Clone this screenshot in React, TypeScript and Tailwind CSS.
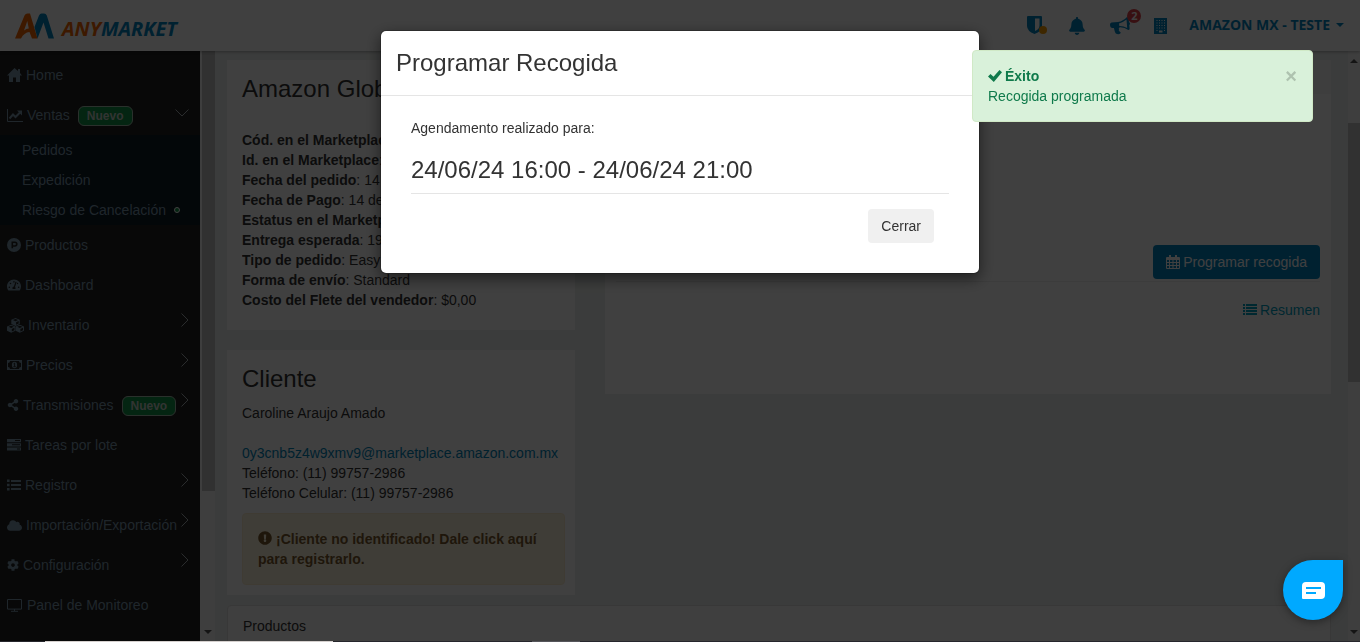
import { useState } from "react";
import type { ReactNode } from "react";
import {
  FaBell,
  FaCloud,
  FaCog,
  FaExclamationCircle,
  FaShareAlt,
  FaTachometerAlt,
} from "react-icons/fa";

type NavItem = {
  label: string;
  icon: ReactNode;
  isNew?: boolean;
  arrow?: "right" | "down";
  children?: { label: string; dot?: boolean }[];
};

function HomeIcon() {
  return (
    <svg width="15" height="14" viewBox="0 0 15 14" aria-hidden="true">
      <path d="M7.5 0L11 3V1h2v4l2 2.500h-2V14H9V9.500H6V14H2V7.500H0z" fill="currentColor" />
    </svg>
  );
}

function ChartIcon() {
  return (
    <svg width="16" height="13" viewBox="0 0 16 13" aria-hidden="true">
      <path d="M.5 0v12.500H16" fill="none" stroke="currentColor" />
      <path d="M2.500 9.500L6 5.500l2.500 2.500L13 3.500" fill="none" stroke="currentColor" strokeWidth="2" />
      <path d="M10 1.500h5v5z" fill="currentColor" />
    </svg>
  );
}

function ProductIcon() {
  return (
    <svg width="14" height="14" viewBox="0 0 14 14" aria-hidden="true">
      <circle cx="7" cy="7" r="7" fill="currentColor" />
      <path d="M5.3 10.3V4.2h2.6a1.8 1.8 0 0 1 0 3.8H5.3" fill="none" stroke="#202020" strokeWidth="1.6" />
    </svg>
  );
}

function CubesIcon() {
  const cube =
    "M4.200 0L8.400 1.800V6L4.200 8 0 6V1.800zM4.200 1L1.600 2.100 4.200 3.200 6.800 2.100zM4.800 4.200v2.500l2.600-1.200V3.100z";
  return (
    <svg width="17" height="15" viewBox="0 0 17 15" fill="currentColor" fillRule="evenodd" aria-hidden="true">
      <path d={cube} transform="translate(4.300 0)" />
      <path d={cube} transform="translate(0 6.700)" />
      <path d={cube} transform="translate(8.600 6.700)" />
    </svg>
  );
}

function MoneyIcon() {
  return (
    <svg width="15" height="10" viewBox="0 0 15 10" aria-hidden="true">
      <path
        fillRule="evenodd"
        fill="currentColor"
        d="M0 0h15v10H0zM3 1A2 2 0 0 1 1 3v4a2 2 0 0 1 2 2h9a2 2 0 0 1 2-2V3a2 2 0 0 1-2-2z"
      />
      <ellipse cx="7.5" cy="5" rx="2.6" ry="3.2" fill="currentColor" />
      <path d="M6.6 3.8l1-.7v3.4M6.4 6.7h2.4" fill="none" stroke="#202020" strokeWidth="0.9" />
    </svg>
  );
}

function TasksIcon() {
  return (
    <svg width="14" height="12" viewBox="0 0 14 12" aria-hidden="true">
      <path
        fillRule="evenodd"
        fill="currentColor"
        d="M0 0h14v3.2H0zM0 4.2h14v3.2H0zM0 8.4h14v3.2H0zM8 1.1h5v1H8zM5 5.3h8v1H5zM10 9.5h3v1h-3z"
      />
    </svg>
  );
}

function ListIcon() {
  return (
    <svg width="14" height="12" viewBox="0 0 14 12" aria-hidden="true">
      <path
        fill="currentColor"
        d="M4 1h10v2H4zM4 5h10v2H4zM4 9h10v2H4zM0 .5h2.6v2.6H0zM0 4.7h2.6v2.6H0zM0 8.9h2.6v2.6H0z"
      />
    </svg>
  );
}

function SummaryIcon() {
  return (
    <svg width="14" height="12" viewBox="0 0 14 12" aria-hidden="true">
      <path
        fill="currentColor"
        d="M3 0h11v2H3zM3 3h11v2H3zM3 6h11v2H3zM3 9h11v2H3zM0 0h2v2H0zM0 3h2v2H0zM0 6h2v2H0zM0 9h2v2H0z"
      />
    </svg>
  );
}

function MonitorIcon() {
  return (
    <svg width="16" height="13" viewBox="0 0 16 13" aria-hidden="true">
      <path d="M.5.5h14v9.6H.5zM4 12.3h7M7.5 10v2" fill="none" stroke="currentColor" />
    </svg>
  );
}

function CalendarIcon() {
  return (
    <svg width="14" height="15" viewBox="0 0 14 15" aria-hidden="true">
      <path
        fillRule="evenodd"
        fill="currentColor"
        d="M1 2h2V0h2v2h4V0h2v2h2q1 0 1 1v10q0 1-1 1H1q-1 0-1-1V3q0-1 1-1zM1 5v2h2V5zM4 5v2h2.5V5zM7.5 5v2H10V5zM11 5v2h2V5zM1 8v2h2V8zM4 8v2h2.500V8zM7.5 8v2H10V8zM11 8v2h2V8zM1 11v2h2v-2zM4 11v2h2.500v-2zM7.500 11v2H10v-2zM11 11v2h2v-2z"
      />
    </svg>
  );
}

function BullhornIcon() {
  return (
    <svg width="20" height="18" viewBox="0 0 20 18" aria-hidden="true">
      <path
        fillRule="evenodd"
        fill="currentColor"
        d="M17 0q1.500 0 1.700 1.500L19 5q1 .5 1 1.500T19.300 8l.3 3.500q0 1.500-1.300 1.500-4-3-9-2.600-1 .8-.3 2.100-.8 1 .6 2 .8.7 1.300 1.300-.8 1.800-4 1.200-1.600-.5-2.100-2.500l-.9-3.500H2.300Q.5 11 .2 9.200L0 7.500Q0 6 1.500 5.600L8 5q5-.8 9-5zM16.500 2.600q-3.500 3-7.500 3.800l.3 2.600q4-.2 7.900 2z"
      />
    </svg>
  );
}

function BuildingIcon() {
  return (
    <svg width="13" height="16" viewBox="0 0 13 16" aria-hidden="true">
      <path
        fillRule="evenodd"
        fill="currentColor"
        d="M0 0h13v16H0zM2.500 2v1h1V2zM5 2v1h1V2zM7.500 2v1h1V2zM10 2v1h1V2zM2.500 4.500v1h1v-1zM5 4.500v1h1v-1zM7.500 4.500v1h1v-1zM10 4.500v1h1v-1zM2.500 7v1h1V7zM5 7v1h1V7zM7.500 7v1h1V7zM10 7v1h1V7zM2.500 9.500v1h1v-1zM5 9.500v1h1v-1zM7.500 9.500v1h1v-1zM10 9.500v1h1v-1zM2.500 12v1h1v-1zM5 12.500v2h3.500v-2zM10 12v1h1v-1z"
      />
    </svg>
  );
}

function CheckIcon() {
  return (
    <svg width="14" height="12" viewBox="0 0 14 12" aria-hidden="true">
      <path d="M0 6.500L2.500 4 5.500 6.800 11.500 0 14 2.200 5.800 12z" fill="currentColor" />
    </svg>
  );
}

function Chevron({ direction }: { direction: "right" | "down" }) {
  return direction === "down" ? (
    <svg width="14" height="8" viewBox="0 0 14 8" aria-hidden="true">
      <path d="M.5.5l6.500 6.500 6.500-6.500" fill="none" stroke="currentColor" />
    </svg>
  ) : (
    <svg width="8" height="14" viewBox="0 0 8 14" className="mb-1.5" aria-hidden="true">
      <path d="M.5.5l6.500 6.500-6.500 6.500" fill="none" stroke="currentColor" />
    </svg>
  );
}

const navItems: NavItem[] = [
  { label: "Home", icon: <HomeIcon /> },
  {
    label: "Ventas",
    icon: <ChartIcon />,
    isNew: true,
    arrow: "down",
    children: [
      { label: "Pedidos" },
      { label: "Expedición" },
      { label: "Riesgo de Cancelación", dot: true },
    ],
  },
  { label: "Productos", icon: <ProductIcon /> },
  { label: "Dashboard", icon: <FaTachometerAlt size={14} /> },
  { label: "Inventario", icon: <CubesIcon />, arrow: "right" },
  { label: "Precios", icon: <MoneyIcon />, arrow: "right" },
  { label: "Transmisiones", icon: <FaShareAlt size={12} />, isNew: true, arrow: "right" },
  { label: "Tareas por lote", icon: <TasksIcon /> },
  { label: "Registro", icon: <ListIcon />, arrow: "right" },
  { label: "Importación/Exportación", icon: <FaCloud size={15} />, arrow: "right" },
  { label: "Configuración", icon: <FaCog size={12} />, arrow: "right" },
  { label: "Panel de Monitoreo", icon: <MonitorIcon /> },
];

const orderDetails = [
  ["Cód. en el Marketplace", ""],
  ["Id. en el Marketplace", ""],
  ["Fecha del pedido", "14"],
  ["Fecha de Pago", "14 de"],
  ["Estatus en el Marketplace", ""],
  ["Entrega esperada", "19"],
  ["Tipo de pedido", "Easy"],
  ["Forma de envío", "Standard"],
  ["Costo del Flete del vendedor", "$0,00"],
];

function Logo() {
  return (
    <a href="#" className="flex items-end gap-2" aria-label="ANYMARKET">
      <svg width="39" height="26" viewBox="0 0 39 26" aria-hidden="true">
        <path
          d="M0 25.500L9.500 2.500Q10.500.500 12.500.500H15L22.500 25.500H17L14.500 19Q9 19.500 6 25.500zM9 17.500q2.500-2 4.800-2L12.300 8z"
          fillRule="evenodd"
          fill="#f26500"
        />
        <path
          d="M22.500 25.500L28.500 9.500 33.500 25.500H39L31.800 2.500Q31 .500 29 .500h-2.500Q25 .500 24 2.500L19.500 14z"
          fill="#0083c0"
        />
      </svg>
      <span className="font-['Open_Sans',sans-serif] text-xl leading-5 font-bold italic text-[#f26500]">
        ANY<span className="text-[#0083c0]">MARKET</span>
      </span>
    </a>
  );
}

function Header() {
  return (
    <header className="relative z-10 flex h-[51px] shrink-0 items-center justify-between bg-white pr-4 pl-[15px] text-[#0083c0] shadow-[0_1px_3px_rgba(0,0,0,0.3)]">
      <Logo />
      <div className="flex items-center">
        <button className="mr-5" aria-label="Seguridad">
          <svg width="21" height="19" viewBox="0 0 21 19" aria-hidden="true">
            <path
              d="M1 0h13q1 0 1 1v9q0 5-7.500 8Q0 15 0 10V1q0-1 1-1zM8 2.500v12.500q4.500-2 4.500-5.500v-7z"
              fillRule="evenodd"
              fill="currentColor"
            />
            <circle cx="16" cy="14" r="4" fill="#f59c00" />
          </svg>
        </button>
        <button className="mr-6" aria-label="Notificaciones">
          <FaBell size={18} />
        </button>
        <button className="relative mr-6" aria-label="Novedades">
          <BullhornIcon />
          <span className="absolute -top-2 left-[17px] flex h-3.5 w-3.5 items-center justify-center rounded-full bg-[#e04048] font-['Open_Sans',sans-serif] text-[11px] font-bold text-white">
            2
          </span>
        </button>
        <button className="mr-[22px]" aria-label="Empresa">
          <BuildingIcon />
        </button>
        <button className="flex items-center gap-1.5 pb-0.5 font-['Open_Sans',sans-serif] text-sm font-bold">
          AMAZON MX - TESTE
          <span className="border-x-4 border-t-4 border-x-transparent border-t-current" />
        </button>
      </div>
    </header>
  );
}

function Sidebar() {
  return (
    <aside className="flex shrink-0">
      <nav className="w-[200px] overflow-hidden bg-[#202020] pt-1 text-sm text-[#7c98ab]">
        {navItems.map((item) => (
          <div key={item.label}>
            <a href="#" className="flex h-10 items-center pr-[11px] pl-[7px] whitespace-nowrap">
              {item.icon}
              <span className="ml-1">{item.label}</span>
              {item.isNew && (
                <span className="mt-0.5 ml-2 flex h-5 items-center rounded-md border border-[#a9c0b1] bg-[#119247] px-2 text-xs font-bold text-[#c5cdc8]">
                  Nuevo
                </span>
              )}
              {item.arrow && (
                <span className="ml-auto pb-1 text-[#a9aeb2]">
                  <Chevron direction={item.arrow} />
                </span>
              )}
            </a>
            {item.children && (
              <div className="bg-[#0c1c26]">
                {item.children.map((child) => (
                  <a key={child.label} href="#" className="flex h-[30px] items-center gap-2 pl-[22px]">
                    {child.label}
                    {child.dot && (
                      <span className="h-1.5 w-1.5 rounded-full border border-white bg-[#119247]" />
                    )}
                  </a>
                ))}
              </div>
            )}
          </div>
        ))}
      </nav>
      <div className="flex w-[15px] flex-col items-end justify-between bg-[#f8f8f8]">
        <div className="h-[440px] w-[13px] bg-[#c1c1c1]" />
        <span className="mr-[3px] mb-2 border-x-4 border-t-4 border-x-transparent border-t-[#505050]" />
      </div>
    </aside>
  );
}

function OrderCard() {
  return (
    <section className="bg-white px-[15px] pt-[15px] pb-5">
      <h2 className="mb-[27px] text-2xl leading-7">Amazon Global</h2>
      {orderDetails.map(([label, value]) => (
        <p key={label} className="truncate leading-5">
          <strong>{label}</strong>: {value}
        </p>
      ))}
    </section>
  );
}

function CustomerCard() {
  return (
    <section className="bg-white px-[15px] pt-[15px] pb-2.5">
      <h2 className="mb-2.5 text-2xl leading-7">Cliente</h2>
      <p className="mb-5 leading-5">Caroline Araujo Amado</p>
      <a href="#" className="leading-5 text-[#0083b8]">
        0y3cnb5z4w9xmv9@marketplace.amazon.com.mx
      </a>
      <p className="leading-5">Teléfono: (11) 99757-2986</p>
      <p className="leading-5">Teléfono Celular: (11) 99757-2986</p>
      <a
        href="#"
        className="mt-2.5 mr-[-5px] block rounded border border-[#faebcc] bg-[#fcf3dc] p-[15px] leading-5 font-bold text-[#7a5a2c]"
      >
        <FaExclamationCircle size={14} className="mr-1 inline align-[-1px]" />
        ¡Cliente no identificado! Dale click aquí para registrarlo.
      </a>
    </section>
  );
}

function ActionsCard() {
  return (
    <section className="flex h-[334px] flex-col bg-white">
      <div className="h-[34px] bg-[#f5f5f5]" />
      <div className="mt-[151px] flex flex-col items-end px-[11px]">
        <button className="flex h-[34px] items-center gap-[3px] rounded bg-[#0083c0] px-[13px] text-white">
          <CalendarIcon />
          Programar recogida
        </button>
        <hr className="mt-0.5 w-full border-[#eee]" />
        <a href="#" className="mt-[18px] flex items-center gap-[3px] leading-5 text-[#009ec0]">
          <SummaryIcon />
          Resumen
        </a>
      </div>
    </section>
  );
}

function ScheduleModal({ onClose }: { onClose: () => void }) {
  return (
    <div
      role="dialog"
      aria-modal="true"
      aria-labelledby="schedule-title"
      className="w-[600px] max-w-full rounded-md border border-black/20 bg-white bg-clip-padding shadow-[0_5px_15px_rgba(0,0,0,0.5)]"
    >
      <div className="border-b border-[#e5e5e5] p-[15px]">
        <h1 id="schedule-title" className="text-2xl leading-[34px]">
          Programar Recogida
        </h1>
      </div>
      <div className="px-[30px] pt-[22px] pb-[30px]">
        <p className="leading-5">Agendamento realizado para:</p>
        <p className="mt-[18px] border-b border-[#e5e5e5] pb-2.5 text-2xl leading-[27px]">
          24/06/24 16:00 - 24/06/24 21:00
        </p>
        <div className="mt-[15px] flex justify-end px-[15px]">
          <button onClick={onClose} className="h-[34px] rounded bg-[#f0f0f0] px-[13px]">
            Cerrar
          </button>
        </div>
      </div>
    </div>
  );
}

function Toast({ onClose }: { onClose: () => void }) {
  return (
    <div
      role="alert"
      className="fixed top-[50px] right-[47px] z-40 flex w-[341px] items-start justify-between rounded border border-[#d0e9c6] bg-[#d9f1da] p-[15px] leading-5 text-[#0f7a4b]"
    >
      <div>
        <p className="flex items-center gap-[3px] font-bold">
          <CheckIcon />
          Éxito
        </p>
        <p>Recogida programada</p>
      </div>
      <button onClick={onClose} aria-label="Cerrar aviso" className="text-xl leading-5 font-bold text-[#aec2af]">
        ×
      </button>
    </div>
  );
}

export default function App() {
  const [modalOpen, setModalOpen] = useState(true);
  const [toastOpen, setToastOpen] = useState(true);

  return (
    <div className="flex h-screen flex-col overflow-hidden bg-white font-['Liberation_Sans',Arial,sans-serif] text-sm text-[#333]">
      <Header />
      <div className="flex min-h-0 flex-1">
        <Sidebar />
        <main className="min-w-0 flex-1 overflow-hidden bg-[#ecf0ee] pt-[9px] pr-[17px] pl-3">
          <div className="grid grid-cols-3 items-start gap-x-[30px]">
            <div className="flex flex-col gap-5">
              <OrderCard />
              <CustomerCard />
            </div>
            <div className="col-span-2">
              <ActionsCard />
            </div>
          </div>
          <section className="mt-2.5 rounded-t border border-[#ddd] bg-[#f9f9f9] px-[15px] py-2.5 leading-5">
            Productos
          </section>
        </main>
        <div className="flex w-3 shrink-0 flex-col items-center justify-between bg-[#f8f8f8] py-2">
          <span className="border-x-4 border-b-4 border-x-transparent border-b-[#505050]" />
          <div className="mb-[188px] h-[259px] w-full bg-[#c1c1c1]" />
          <span className="border-x-4 border-t-4 border-x-transparent border-t-[#505050]" />
        </div>
      </div>

      {modalOpen && (
        <div className="fixed inset-0 z-30 flex items-start justify-center bg-black/75 pt-[30px]">
          <ScheduleModal onClose={() => setModalOpen(false)} />
        </div>
      )}
      {toastOpen && <Toast onClose={() => setToastOpen(false)} />}

      <div className="fixed inset-x-0 bottom-0 z-30 flex h-px bg-[#26262c]">
        <span className="ml-[45px] w-72 bg-[#d5d0ce]" />
        <span className="ml-[199px] w-12 bg-[#55555a]" />
      </div>

      <button
        aria-label="Abrir chat"
        className="fixed right-[17px] bottom-[22px] z-40 flex h-[60px] w-[60px] items-center justify-center rounded-full rounded-tr-md bg-[#00a9ff] shadow-[0_2px_8px_rgba(0,0,0,0.4)]"
      >
        <svg width="23" height="17" viewBox="0 0 23 17" aria-hidden="true">
          <path d="M4 0h15q4 0 4 4v9q0 4-4 4H1q-1 0-1-1V4q0-4 4-4z" fill="#fff" />
          <path d="M4 6h15M4 11h10" stroke="#00a9ff" strokeWidth="2" />
        </svg>
      </button>
    </div>
  );
}
